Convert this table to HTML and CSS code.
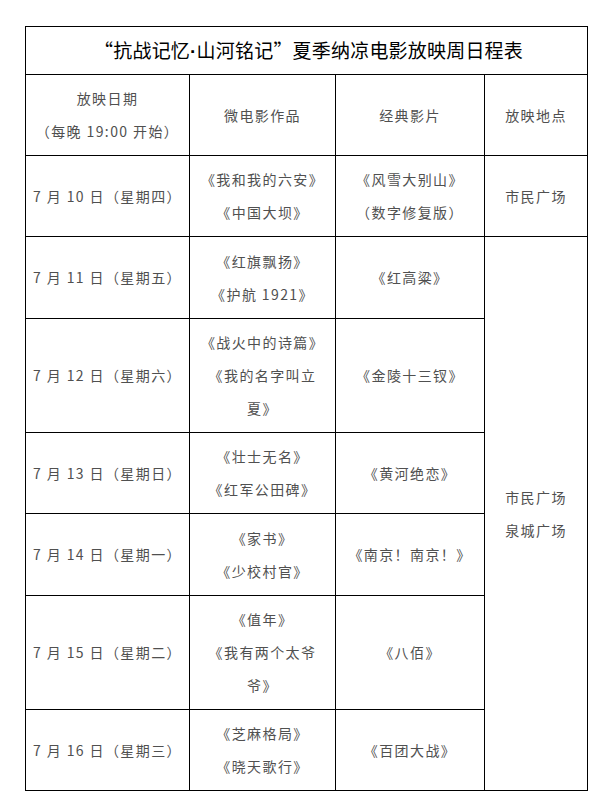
FILE: index.html
```html
<!DOCTYPE html>
<html lang="zh-CN">
<head>
<meta charset="utf-8">
<title>夏季纳凉电影放映周日程表</title>
<link rel="stylesheet" href="styles.css">
</head>
<body>
<div class="page">
  <table class="schedule">
    <colgroup>
      <col class="c-date">
      <col class="c-micro">
      <col class="c-classic">
      <col class="c-place">
    </colgroup>
    <tbody>
      <tr class="r-title"><td colspan="4" class="title">“抗战记忆<span class="dot">·</span>山河铭记”夏季纳凉电影放映周日程表</td></tr>
      <tr class="r-81">
        <td>放映日期<br>（每晚 19:00 开始）</td>
        <td>微电影作品</td>
        <td>经典影片</td>
        <td>放映地点</td>
      </tr>
      <tr class="r-81">
        <td>7 月 10 日（星期四）</td>
        <td>《我和我的六安》<br>《中国大坝》</td>
        <td>《风雪大别山》<br>（数字修复版）</td>
        <td>市民广场</td>
      </tr>
      <tr class="r-82">
        <td>7 月 11 日（星期五）</td>
        <td>《红旗飘扬》<br>《护航 1921》</td>
        <td>《红高粱》</td>
        <td rowspan="7">市民广场<br>泉城广场</td>
      </tr>
      <tr class="r-114">
        <td>7 月 12 日（星期六）</td>
        <td>《战火中的诗篇》<br>《我的名字叫立<br>夏》</td>
        <td>《金陵十三钗》</td>
      </tr>
      <tr class="r-81">
        <td>7 月 13 日（星期日）</td>
        <td>《壮士无名》<br>《红军公田碑》</td>
        <td>《黄河绝恋》</td>
      </tr>
      <tr class="r-82">
        <td>7 月 14 日（星期一）</td>
        <td>《家书》<br>《少校村官》</td>
        <td>《南京！南京！》</td>
      </tr>
      <tr class="r-114">
        <td>7 月 15 日（星期二）</td>
        <td>《值年》<br>《我有两个太爷<br>爷》</td>
        <td>《八佰》</td>
      </tr>
      <tr class="r-81">
        <td>7 月 16 日（星期三）</td>
        <td>《芝麻格局》<br>《晓天歌行》</td>
        <td>《百团大战》</td>
      </tr>
    </tbody>
  </table>
</div>
</body>
</html>
```

FILE: styles.css
```css
html, body {
  margin: 0;
  padding: 0;
  background: #ffffff;
}

.page {
  padding: 26px 0 0 25px;
}

.schedule {
  border-collapse: collapse;
  table-layout: fixed;
  width: 562px;
  font-family: "Noto Sans CJK SC", "Noto Sans", sans-serif;
  font-size: 14px;
  line-height: 33px;
  letter-spacing: 1.4px;
  color: #505050;
}

.c-date { width: 164px; }
.c-micro { width: 146px; }
.c-classic { width: 149px; }
.c-place { width: 103px; }

.schedule td {
  border: 1px solid #000;
  padding: 0 2px;
  text-align: center;
  vertical-align: middle;
  white-space: nowrap;
}

.schedule .title {
  font-size: 19px;
  letter-spacing: 0.2px;
  color: #000;
  font-weight: 400;
  line-height: 26px;
  padding-left: 6px;
}

.title .dot {
  font-family: "Liberation Sans", "Noto Sans", sans-serif;
  font-weight: 700;
}

.r-title { height: 48px; }
.r-81 { height: 81px; }
.r-82 { height: 82px; }
.r-114 { height: 114px; }
```
